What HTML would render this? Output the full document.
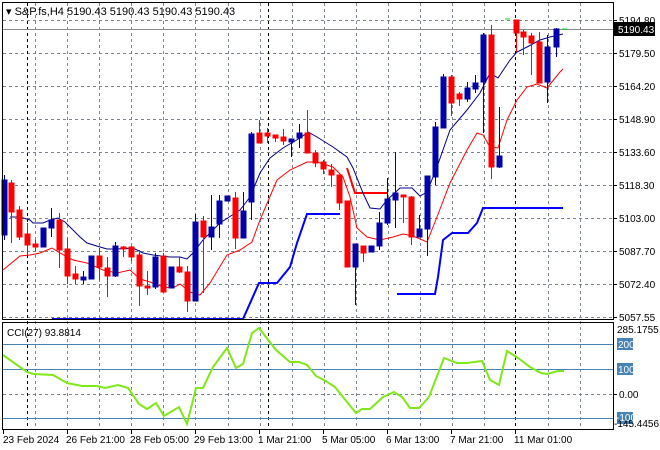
<!DOCTYPE html>
<html><head><meta charset="utf-8"><style>
html,body{margin:0;padding:0;background:#fff;width:660px;height:450px;overflow:hidden}
svg{display:block;font-family:"Liberation Sans",sans-serif;font-size:10px}
</style></head><body>
<svg width="660" height="450" xmlns="http://www.w3.org/2000/svg">
<rect width="660" height="450" fill="#fff"/>
<g stroke="#7b8591" stroke-dasharray="3,3" stroke-width="1" fill="none">
<path d="M3 20.5H613M3 53.5H613M3 86.5H613M3 119.5H613M3 152.5H613M3 185.5H613M3 218.5H613M3 251.5H613M3 284.5H613M3 317.5H613M3 394.5H613"/>
<path d="M35.5 3V429M67.5 3V429M99.5 3V429M131.5 3V429M163.5 3V429M195.5 3V429M228.5 3V429M260.5 3V429M292.5 3V429M324.5 3V429M356.5 3V429M388.5 3V429M420.5 3V429M452.5 3V429M484.5 3V429M548.5 3V429M580.5 3V429"/>
</g>
<g stroke="#000" stroke-dasharray="3,3" fill="none"><path d="M27.5 3V429M268.5 3V429M515.5 3V429"/></g>
<path d="M3 29.5H613" stroke="#8a8a8a"/>
<!-- step lines -->
<polyline fill="none" stroke="#0000ff" stroke-width="2" points="52,319 243,319 259,283 277,283 290,267 297,243 307,214 340,214"/>
<polyline fill="none" stroke="#0000ff" stroke-width="2" points="397,294 435,294 438,277 443,240 452,233 468,233 477,223 483,208 563,208"/>
<polyline fill="none" stroke="#ff0000" stroke-width="2" points="347,168 355,193 387,193"/>
<!-- MAs -->
<polyline fill="none" stroke="#00008b" stroke-width="1" points="10,217 20,217 30,220 33,223 43,223 50,220 58,218 65,222 80,237 87,243 100,247 107,249 117,249 133,248 143,253 153,255 170,257 180,257 187,259 193,253 203,240 210,233 220,223 240,210 250,197 260,173 270,158 283,148 300,138 308,132 317,137 333,147 347,157 353,168 363,193 370,208 380,209 387,200 400,188 412,188 420,196 427,192 437,167 450,130 467,110 480,93 490,73 498,78 510,60 517,52 527,47 540,40 550,37 563,34"/>
<polyline fill="none" stroke="#ff0000" stroke-width="1" points="3,270 20,256 30,255 40,253 52,248 60,253 73,260 87,263 103,270 117,273 130,270 140,279 150,282 163,287 173,288 180,284 190,292 200,295 210,283 227,255 240,250 252,242 260,220 277,180 290,170 307,162 317,162 333,167 343,177 350,197 357,228 367,237 380,240 393,237 403,234 413,236 427,242 437,217 450,183 467,150 477,133 483,135 490,147 498,148 507,120 517,100 527,87 537,84 547,88 560,72 563,69"/>
<path d="M505 19H510M562 29H567" stroke="#00e000"/>
<!-- candles -->
<g id="c">
<g stroke="#0000aa" fill="#0000aa">
<path d="M4.5 175V240M43.5 228V247M51.5 208V237M83.5 271V284M91.5 256V279M115.5 242V277M155.5 253V289M171.5 267V288M195.5 214V301M211.5 195V250M219.5 195V238M227.5 196V201M243.5 192V238M251.5 132V220M291.5 139V157M299.5 124V148M355.5 244V305M371.5 246V252M379.5 212V250M387.5 178V225M395.5 152V228M419.5 215V237M427.5 176V256M435.5 122V185M443.5 74V128M467.5 82V102M475.5 75V93M483.5 33V133M499.5 107V168M547.5 35V103M556.5 28V57" fill="none"/>
<rect x="2" y="180" width="5" height="55"/><rect x="41" y="228" width="5" height="19"/><rect x="49" y="220" width="5" height="8"/><rect x="81" y="277" width="5" height="3"/><rect x="89" y="256" width="5" height="23"/><rect x="113" y="246" width="5" height="30"/><rect x="153" y="257" width="5" height="30"/><rect x="169" y="267" width="5" height="21"/><rect x="193" y="222" width="5" height="79"/><rect x="209" y="227" width="5" height="10"/><rect x="217" y="201" width="5" height="23"/><rect x="225" y="196" width="5" height="5"/><rect x="241" y="211" width="5" height="27"/><rect x="249" y="134" width="5" height="68"/><rect x="289" y="139" width="5" height="3"/><rect x="297" y="133" width="5" height="5"/><rect x="353" y="244" width="5" height="23"/><rect x="369" y="246" width="5" height="6"/><rect x="377" y="223" width="5" height="23"/><rect x="385" y="199" width="5" height="24"/><rect x="393" y="193" width="5" height="7"/><rect x="417" y="229" width="5" height="8"/><rect x="425" y="176" width="5" height="53"/><rect x="433" y="127" width="5" height="50"/><rect x="441" y="77" width="5" height="51"/><rect x="465" y="88" width="5" height="11"/><rect x="473" y="83" width="5" height="6"/><rect x="481" y="35" width="5" height="47"/><rect x="497" y="156" width="5" height="11"/><rect x="545" y="47" width="5" height="35"/><rect x="554" y="29" width="5" height="18"/>
</g>
<g stroke="#ff0000" fill="#ff0000">
<path d="M11.5 180V243M19.5 206V240M27.5 223V255M35.5 240V251M59.5 213V268M67.5 238V284M75.5 266V284M99.5 248V280M107.5 257V297M123.5 246V257M131.5 246V261M139.5 250V306M147.5 271V295M163.5 253V292M179.5 257V273M187.5 266V312M203.5 216V293M235.5 192V249M259.5 120V143M267.5 128V143M275.5 135V142M283.5 129V145M307.5 110V153M315.5 150V167M323.5 160V174M331.5 164V187M339.5 175V210M347.5 201V267M363.5 246V262M403.5 195V223M411.5 196V245M451.5 75V116M459.5 92V106M491.5 25V179M516.5 20V52M523.5 30V55M531.5 33V75M539.5 32V83" fill="none"/>
<rect x="9" y="183" width="5" height="29"/><rect x="17" y="210" width="5" height="27"/><rect x="25" y="234" width="5" height="11"/><rect x="33" y="244" width="5" height="3"/><rect x="57" y="220" width="5" height="30"/><rect x="65" y="249" width="5" height="27"/><rect x="73" y="274" width="5" height="5"/><rect x="97" y="256" width="5" height="11"/><rect x="105" y="268" width="5" height="8"/><rect x="121" y="247" width="5" height="2"/><rect x="129" y="247" width="5" height="10"/><rect x="137" y="255" width="5" height="31"/><rect x="145" y="286" width="5" height="2"/><rect x="161" y="256" width="5" height="36"/><rect x="177" y="267" width="5" height="5"/><rect x="185" y="272" width="5" height="29"/><rect x="201" y="221" width="5" height="16"/><rect x="233" y="198" width="5" height="40"/><rect x="257" y="133" width="5" height="10"/><rect x="265" y="133" width="5" height="3"/><rect x="273" y="135" width="5" height="3"/><rect x="281" y="137" width="5" height="4"/><rect x="305" y="133" width="5" height="20"/><rect x="313" y="153" width="5" height="10"/><rect x="321" y="162" width="5" height="7"/><rect x="329" y="170" width="5" height="5"/><rect x="337" y="175" width="5" height="28"/><rect x="345" y="201" width="5" height="66"/><rect x="361" y="246" width="5" height="7"/><rect x="401" y="195" width="5" height="2"/><rect x="409" y="197" width="5" height="40"/><rect x="449" y="77" width="5" height="26"/><rect x="457" y="94" width="5" height="5"/><rect x="489" y="35" width="5" height="132"/><rect x="514" y="20" width="5" height="13"/><rect x="521" y="32" width="5" height="5"/><rect x="529" y="36" width="5" height="7"/><rect x="537" y="42" width="5" height="41"/>
</g>
</g>
<!-- CCI levels -->
<path d="M3 344.5H613M3 369.5H613M3 418.5H613" stroke="#4682b4"/>
<polyline fill="none" stroke="#7fe817" stroke-width="2" points="3,355 17,365 27,372 34,374 53,375 67,383 82,386 97,386 105,388 118,385 128,388 139,404 147,409 156,403 164,416 179,407 187,424 196,388 203,388 213,367 227,348 236,368 243,364 252,333 259,328 276,350 290,362 299,362 307,365 316,376 324,380 335,387 343,397 356,413 362,409 370,409 383,397 394,392 402,397 410,408 419,408 429,397 444,358 457,363 467,363 482,361 490,380 499,385 507,351 518,358 530,367 541,373 547,374 558,371 564,371"/>
<!-- frames -->
<rect x="2.5" y="2.5" width="611" height="317" fill="none" stroke="#000"/>
<rect x="2.5" y="322.5" width="611" height="107" fill="none" stroke="#000"/>
<!-- ticks -->
<path d="M614 20.5H617M614 53.5H617M614 86.5H617M614 119.5H617M614 152.5H617M614 185.5H617M614 218.5H617M614 251.5H617M614 284.5H617M614 317.5H617M614 394.5H617M3.5 430V434M67.5 430V434M131.5 430V434M195.5 430V434M259.5 430V434M323.5 430V434M387.5 430V434M451.5 430V434M515.5 430V434" stroke="#000"/>
<g fill="#000">
<text x="6" y="15" font-size="11">▾ S&amp;P.fs,H4  5190.43 5190.43 5190.43 5190.43</text>
<text x="619" y="24">5194.80</text>
<text x="619" y="57">5179.50</text>
<text x="619" y="90">5164.20</text>
<text x="619" y="123">5148.90</text>
<text x="619" y="156">5133.60</text>
<text x="619" y="189">5118.30</text>
<text x="619" y="222">5103.00</text>
<text x="619" y="255">5087.70</text>
<text x="619" y="288">5072.40</text>
<text x="619" y="321">5057.55</text>
<text x="7" y="336">CCI(27) 93.8814</text>
<text x="617" y="333">285.1755</text>
<text x="619" y="398">0.00</text>
</g>
<rect x="613" y="22" width="42" height="14" fill="#000"/>
<text x="618" y="33" fill="#fff">5190.43</text>
<rect x="617" y="338" width="16" height="12" fill="#4682b4"/>
<rect x="617" y="363" width="16" height="12" fill="#4682b4"/>
<rect x="617" y="412" width="16" height="12" fill="#4682b4"/>
<text x="618" y="348" fill="#fff">200</text>
<text x="618" y="373" fill="#fff">100</text>
<text x="614" y="427" fill="#000">-145.4456</text>
<text x="616" y="421" fill="#fff">-100</text>
<g fill="#000">
<text x="3" y="443">23 Feb 2024</text>
<text x="66" y="443">26 Feb 21:00</text>
<text x="130" y="443">28 Feb 05:00</text>
<text x="194" y="443">29 Feb 13:00</text>
<text x="258" y="443">1 Mar 21:00</text>
<text x="322" y="443">5 Mar 05:00</text>
<text x="386" y="443">6 Mar 13:00</text>
<text x="450" y="443">7 Mar 21:00</text>
<text x="514" y="443">11 Mar 01:00</text>
</g>
</svg>
</body></html>
